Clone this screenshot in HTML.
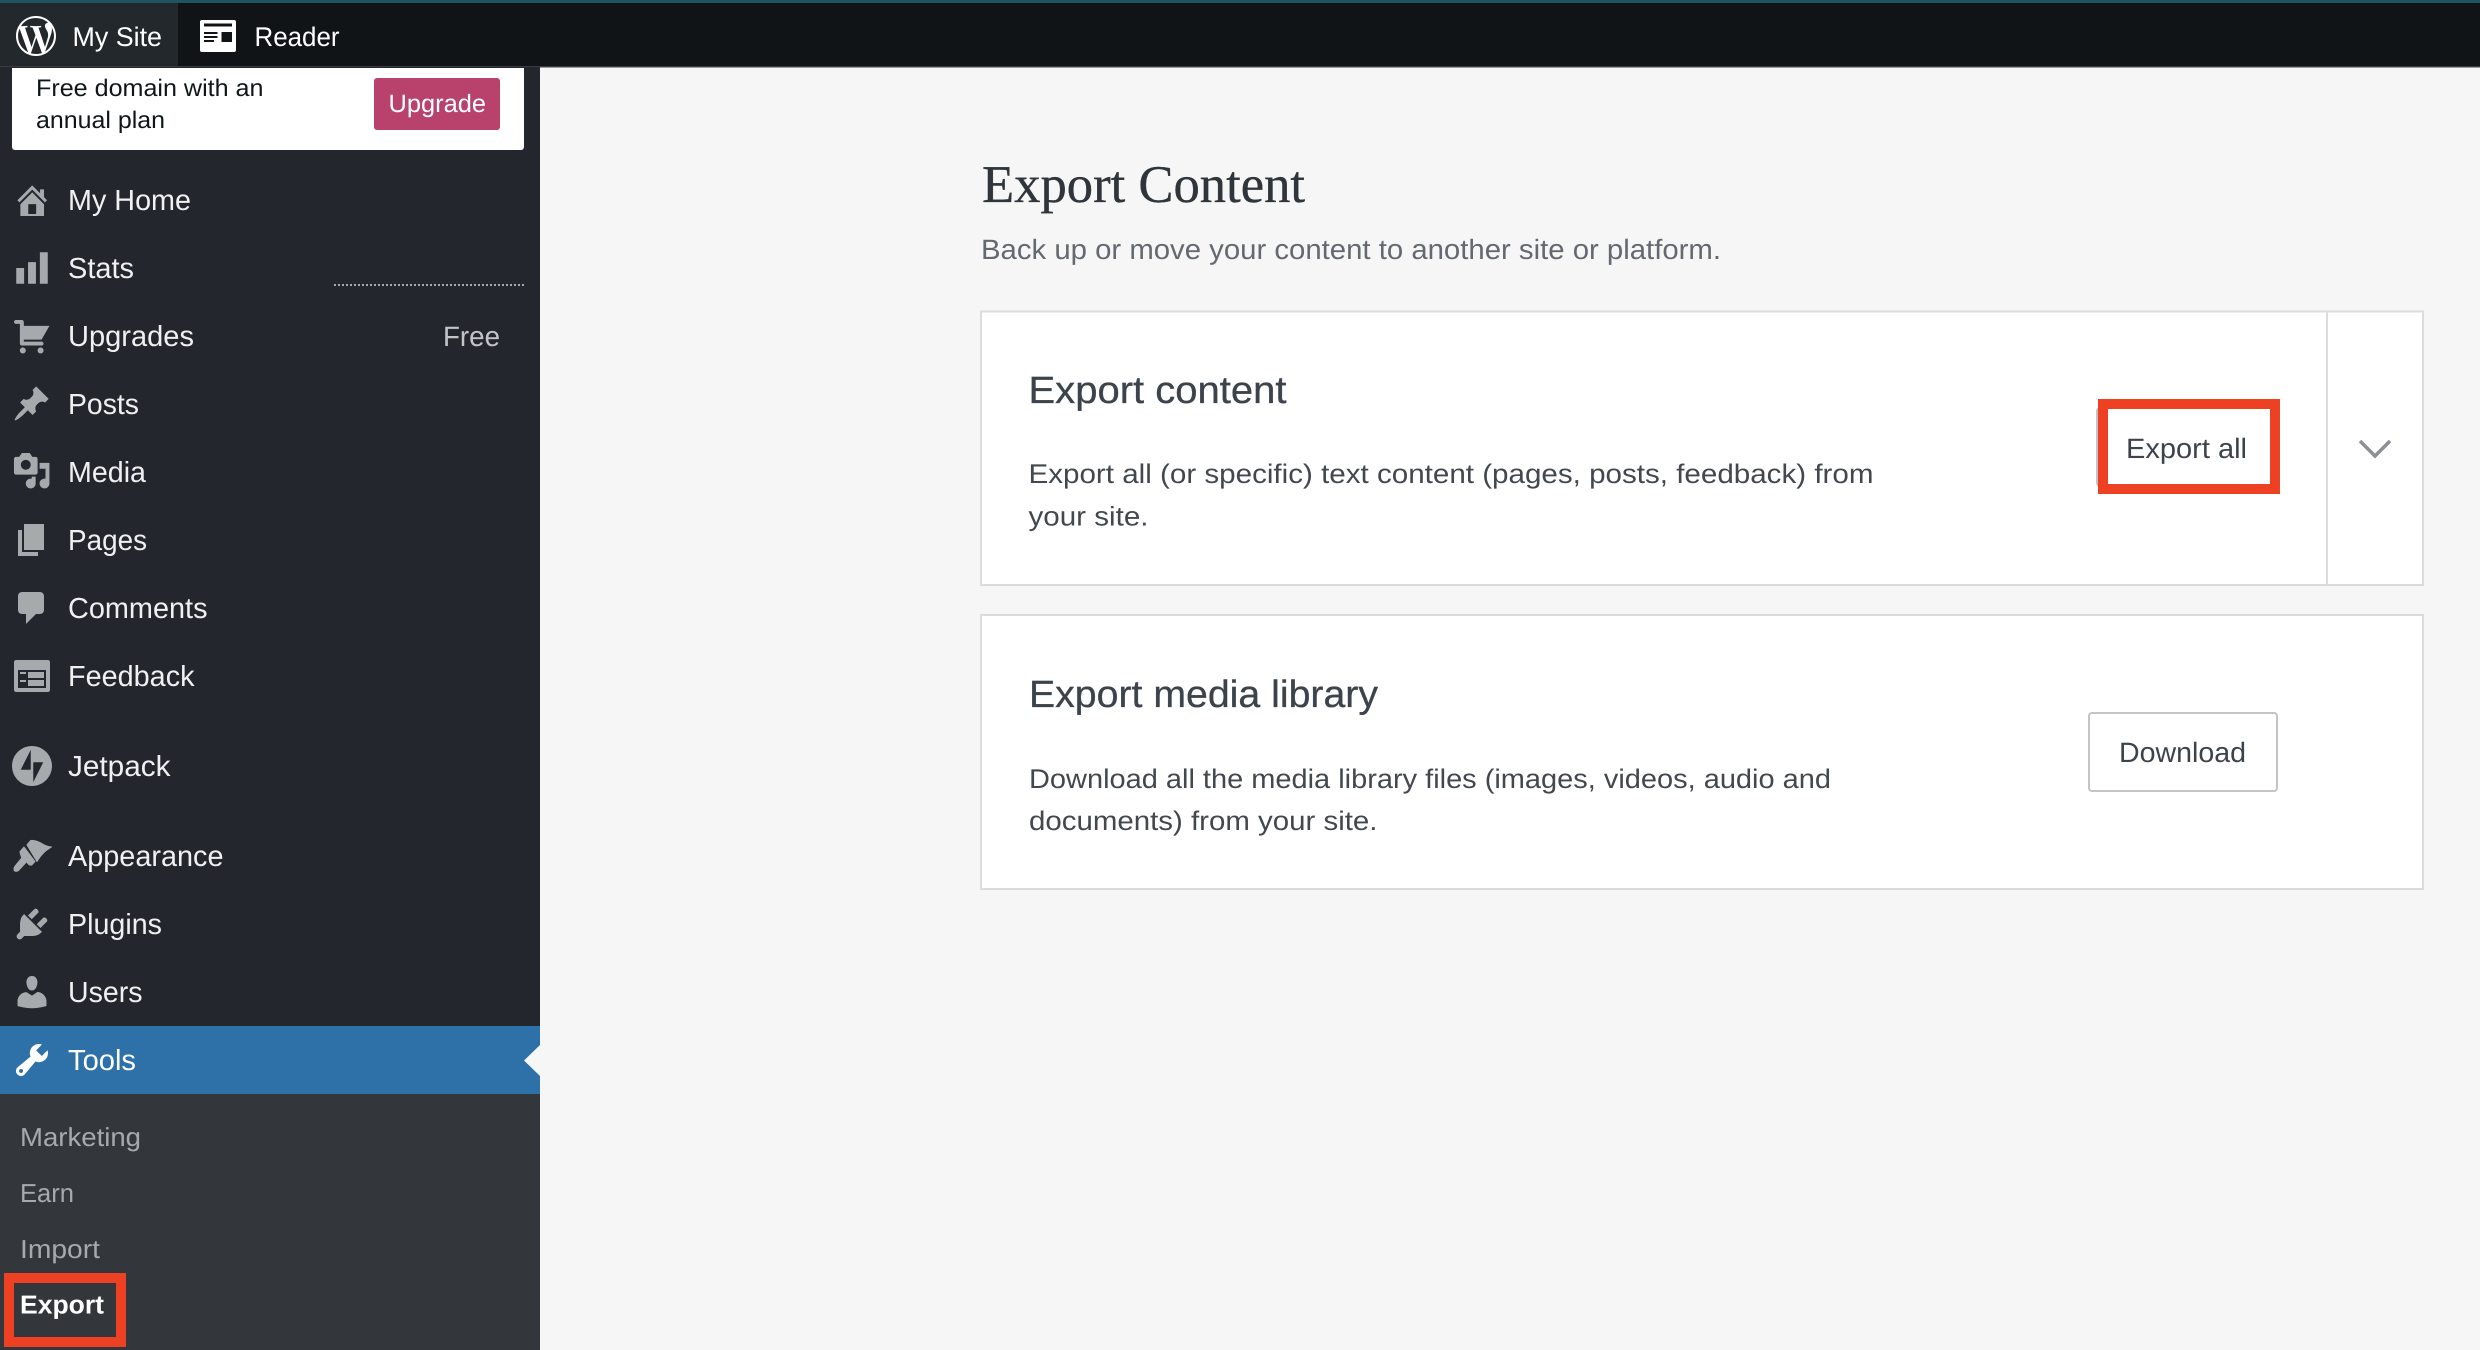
<!DOCTYPE html>
<html lang="en"><head><meta charset="utf-8"><title>Export Content</title>
<style>
html,body{margin:0;padding:0;width:2480px;height:1350px;overflow:hidden;background:#f6f6f7}
svg{display:block}
text{font-family:"Liberation Sans",sans-serif;text-rendering:geometricPrecision}
.m{font-size:29px;fill:#f0f0f1}
.s{font-size:26px;fill:#a7aaad}
.d{font-size:27px;fill:#43484e}
.h{font-size:38px;fill:#3c434a;stroke:#3c434a;stroke-width:.3px}
.i{fill:#a7aaad}
</style></head><body>
<svg width="2480" height="1350" viewBox="0 0 2480 1350" xmlns="http://www.w3.org/2000/svg">
<rect width="2480" height="1350" fill="#f6f6f7"/>

<!-- top bar -->
<rect width="2480" height="66" fill="#101417"/>
<rect width="2480" height="3" fill="#1f5560"/>
<rect y="66" width="2480" height="1.500" fill="#3a3d40"/>
<rect y="3" width="178" height="63" fill="#23282d"/>
<g transform="translate(12,12) scale(2)" fill="#fff"><path d="M12 2C6.486 2 2 6.486 2 12s4.486 10 10 10 10-4.486 10-10S17.514 2 12 2zM3.010 12c0-1.303.280-2.540.780-3.657l4.290 11.752C5.080 18.638 3.010 15.560 3.010 12zM12 20.990c-.882 0-1.734-.130-2.540-.366l2.698-7.840 2.763 7.570c.020.044.042.085.065.124-.934.330-1.938.512-2.985.512zm1.240-13.206c.540-.028 1.028-.085 1.028-.085.484-.058.427-.770-.057-.742 0 0-1.458.114-2.400.114-.885 0-2.370-.114-2.370-.114-.486-.028-.543.712-.058.740 0 0 .460.058.945.086l1.402 3.840-1.970 5.905-3.275-9.746c.542-.028 1.030-.085 1.030-.085.484-.058.426-.770-.058-.742 0 0-1.457.114-2.400.114-.170 0-.370-.004-.580-.010C6.080 4.395 8.850 3.010 12 3.010c2.340 0 4.474.895 6.073 2.360-.038-.002-.076-.008-.115-.008-.885 0-1.514.770-1.514 1.600 0 .740.430 1.368.885 2.108.343.600.742 1.370.742 2.482 0 .770-.296 1.664-.685 2.910l-.900 3.010-3.260-9.690zm3.293 12.033l2.746-7.940c.514-1.283.685-2.310.685-3.223 0-.330-.022-.638-.060-.925.703 1.283 1.103 2.755 1.103 4.270 0 3.212-1.740 6.016-4.474 7.818z"/></g>
<text x="72.500" y="46" font-size="27" fill="#fff" textLength="89.500" lengthAdjust="spacingAndGlyphs">My Site</text>
<rect x="200" y="20" width="36" height="32" rx="2" fill="#fff"/>
<rect x="204" y="23.500" width="28" height="3" fill="#101417"/>
<rect x="204" y="32" width="13.500" height="2" fill="#101417"/><rect x="204" y="36" width="13.500" height="2" fill="#101417"/><rect x="204" y="40" width="10" height="2" fill="#101417"/>
<rect x="221.500" y="32" width="10.500" height="10" fill="#101417"/>
<text x="254.500" y="46" font-size="27" fill="#fff" textLength="85" lengthAdjust="spacingAndGlyphs">Reader</text>

<!-- sidebar -->
<rect y="67" width="540" height="1283" fill="#23272d"/>
<path d="M12 68H524V147a3 3 0 0 1-3 3H15a3 3 0 0 1-3-3z" fill="#fff"/>
<text x="36" y="96" font-size="24" fill="#101517" textLength="227.500" lengthAdjust="spacingAndGlyphs">Free domain with an</text>
<text x="36" y="128" font-size="24" fill="#101517" textLength="129" lengthAdjust="spacingAndGlyphs">annual plan</text>
<rect x="374" y="78" width="126" height="52" rx="3" fill="#b9426c"/>
<text x="388.500" y="112" font-size="25" fill="#fff" textLength="97.500" lengthAdjust="spacingAndGlyphs">Upgrade</text>

<line x1="334" y1="285" x2="524" y2="285" stroke="#a7aaad" stroke-width="2" stroke-dasharray="2 2"/>

<g class="i">
<path transform="translate(12.500,180.500) scale(1.97)" d="M16 8.500l1.530 1.530-1.060 1.060L10 4.620l-6.470 6.470-1.060-1.060L10 2.500l4 4v-2h2v4zm-6-2.460l6 5.990V18H4v-5.970zM12 17v-5H8v5h4z"/>
<path transform="translate(12.300,248.300) scale(1.97)" d="M18 18V2h-4v16h4zm-6 0V7H8v11h4zm-6 0v-8H2v8h4z"/>
<path transform="translate(12,316) scale(1.97)" d="M6 13h9c.550 0 1 .450 1 1s-.450 1-1 1H5c-.550 0-1-.450-1-1V4H2c-.550 0-1-.450-1-1s.450-1 1-1h3c.550 0 1 .450 1 1v2h13l-4 7H6v1zm-.500 3c.830 0 1.500.670 1.500 1.500S6.330 19 5.500 19 4 18.330 4 17.500 4.670 16 5.500 16zm9 0c.830 0 1.500.670 1.500 1.500s-.670 1.500-1.500 1.500-1.500-.670-1.500-1.500.670-1.500 1.500-1.500z"/>
<path transform="translate(12,384) scale(1.97)" d="M10.440 3.020l1.820-1.820 6.360 6.350-1.830 1.820c-1.050-.680-2.480-.570-3.410.360l-.750.750c-.920.930-1.040 2.350-.350 3.410l-1.830 1.820-2.410-2.410-2.800 2.790c-.420.420-3.380 2.710-3.800 2.290s1.860-3.390 2.280-3.810l2.790-2.790L4.100 9.360l1.830-1.820c1.050.690 2.480.570 3.400-.360l.750-.750c.930-.920 1.050-2.350.360-3.410z"/>
<path transform="translate(12,451) scale(1.97)" d="M13 11V4c0-.550-.450-1-1-1h-1.670L9 1H5L3.670 3H2c-.550 0-1 .450-1 1v7c0 .550.450 1 1 1h10c.550 0 1-.450 1-1zM7 4.500c1.380 0 2.500 1.120 2.500 2.500S8.380 9.500 7 9.500 4.500 8.380 4.500 7 5.620 4.500 7 4.500zM14 6h5v10.500c0 1.380-1.120 2.500-2.500 2.500S14 17.880 14 16.500s1.120-2.500 2.500-2.500c.170 0 .340.020.500.050V9h-3V6zm-4 8.050V13h2v3.500c0 1.380-1.120 2.500-2.500 2.500S7 17.880 7 16.500 8.120 14 9.500 14c.170 0 .340.020.500.050z"/>
<path transform="translate(12,520) scale(2)" d="M6 15V2h10v13H6zm-1 1h8v2H3V5h2v11z"/>
<path transform="translate(12,588) scale(2)" d="M5 2h9c1.100 0 2 .900 2 2v7c0 1.100-.900 2-2 2h-2l-5 5v-5H5c-1.100 0-2-.900-2-2V4c0-1.100.900-2 2-2z"/>
<path transform="translate(12,656) scale(2)" d="M2 2h16c.550 0 1 .450 1 1v14c0 .550-.450 1-1 1H2c-.550 0-1-.450-1-1V3c0-.550.450-1 1-1zm15 14V7H3v9h14zM4 8v1h3V8H4zm4 0v3h8V8H8zm-4 4v1h3v-1H4zm4 0v3h8v-3H8z"/>
<path transform="translate(12,746) scale(1.25)" d="M16,0C7.200,0,0,7.200,0,16s7.200,16,16,16s16-7.200,16-16S24.800,0,16,0z M15,19H7l8-16V19z M17,29V13h8L17,29z"/>
<path stroke="#a7aaad" stroke-width="1" stroke-linejoin="round" d="M27 845 30.700 840.500C34 840 38 841.500 41.700 843.500 45 845.500 48 846.500 51.500 847 48.500 849 45.500 850.500 43 853.500 40.500 856 38.500 859 37 861.500z"/>
<path stroke="#a7aaad" stroke-width="1" stroke-linejoin="round" d="M24 847 35 861.500 31.700 865C30 865.500 28 864 26.700 861.700L18.500 870.500C16.500 872 14 871.500 14 869.500 14 867.500 15 866 16 865L21.700 858C21.500 856 20 854 20 851.700z"/>
<path transform="translate(12,904) scale(2)" d="M13.110 4.360L9.870 7.600 8 5.730l3.240-3.240c.350-.340 1.050-.200 1.560.320.520.510.660 1.210.310 1.550zm-8 1.770l.910-1.120 9.010 9.010-1.190.840c-.710.710-2.630 1.160-3.820 1.160H6.140L4.900 17.260c-.590.590-1.540.590-2.120 0-.590-.580-.590-1.530 0-2.120l1.240-1.240v-3.880c0-1.130.400-3.190 1.090-3.890zm7.260 3.970l3.240-3.240c.340-.350 1.040-.210 1.550.310.520.510.660 1.210.310 1.550l-3.240 3.250z"/>
<path transform="translate(12,972) scale(2)" d="M10 9.250c-2.270 0-2.730-3.440-2.730-3.440C7 4.020 7.820 2 9.970 2c2.160 0 2.980 2.020 2.710 3.810 0 0-.410 3.440-2.680 3.440zm0 2.570L12.720 10c2.390 0 4.520 2.330 4.520 4.530v2.490s-3.650 1.130-7.240 1.130c-3.650 0-7.240-1.130-7.240-1.130v-2.490c0-2.250 1.940-4.480 4.470-4.480z"/>
</g>

<text class="m" x="68" y="210" textLength="123" lengthAdjust="spacingAndGlyphs">My Home</text>
<text class="m" x="68" y="278" textLength="66" lengthAdjust="spacingAndGlyphs">Stats</text>
<text class="m" x="68" y="346" textLength="126" lengthAdjust="spacingAndGlyphs">Upgrades</text>
<text x="443" y="346" font-size="28" fill="#c3c4c7" textLength="57" lengthAdjust="spacingAndGlyphs">Free</text>
<text class="m" x="68" y="414" textLength="71" lengthAdjust="spacingAndGlyphs">Posts</text>
<text class="m" x="68" y="482" textLength="78" lengthAdjust="spacingAndGlyphs">Media</text>
<text class="m" x="68" y="550" textLength="79" lengthAdjust="spacingAndGlyphs">Pages</text>
<text class="m" x="68" y="618" textLength="139.500" lengthAdjust="spacingAndGlyphs">Comments</text>
<text class="m" x="68" y="686" textLength="126.500" lengthAdjust="spacingAndGlyphs">Feedback</text>
<text class="m" x="68" y="776" textLength="102.500" lengthAdjust="spacingAndGlyphs">Jetpack</text>
<text class="m" x="68" y="866" textLength="155.500" lengthAdjust="spacingAndGlyphs">Appearance</text>
<text class="m" x="68" y="934" textLength="94" lengthAdjust="spacingAndGlyphs">Plugins</text>
<text class="m" x="68" y="1002" textLength="74.500" lengthAdjust="spacingAndGlyphs">Users</text>

<rect y="1026" width="540" height="68" fill="#2d71a8"/>
<path d="M540 1045V1076L524 1060.500z" fill="#f6f7f7"/>
<path transform="translate(12,1040) scale(2)" fill="#fff" d="M16.680 9.770c-1.340 1.340-3.300 1.670-4.950.990l-5.410 6.520c-.990.990-2.590.990-3.580 0s-.990-2.590 0-3.570l6.520-5.420c-.680-1.650-.350-3.610.990-4.950 1.280-1.280 3.120-1.620 4.720-1.060l-2.890 2.890 2.820 2.820 2.860-2.870c.530 1.580.180 3.390-1.080 4.670zM3.810 16.210c.400.390 1.040.390 1.430 0 .400-.400.400-1.040 0-1.430-.390-.400-1.030-.400-1.430 0-.390.390-.390 1.030 0 1.430z"/>
<text x="68" y="1070" font-size="29" fill="#fff" textLength="68" lengthAdjust="spacingAndGlyphs">Tools</text>

<rect y="1094" width="540" height="256" fill="#33373c"/>
<text class="s" x="20" y="1146" textLength="121" lengthAdjust="spacingAndGlyphs">Marketing</text>
<text class="s" x="20" y="1202" textLength="54" lengthAdjust="spacingAndGlyphs">Earn</text>
<text class="s" x="20" y="1258" textLength="80" lengthAdjust="spacingAndGlyphs">Import</text>
<text x="20" y="1313.500" font-size="26" font-weight="700" fill="#fff" textLength="84" lengthAdjust="spacingAndGlyphs">Export</text>
<rect x="9" y="1278" width="112" height="64" fill="none" stroke="#ee4123" stroke-width="10"/>

<!-- content -->
<text x="982" y="202" font-size="53" fill="#2f353a" stroke="#2f353a" stroke-width=".35" style="font-family:'Liberation Serif',serif" textLength="323" lengthAdjust="spacingAndGlyphs">Export Content</text>
<text x="981" y="259" font-size="28" fill="#646970" textLength="740" lengthAdjust="spacingAndGlyphs">Back up or move your content to another site or platform.</text>

<rect x="981" y="311.500" width="1442" height="273.500" fill="#fff" stroke="#dcdcde" stroke-width="2"/>
<line x1="2327" y1="311" x2="2327" y2="585" stroke="#dcdcde" stroke-width="2"/>
<text class="h" x="1028.500" y="403" textLength="258" lengthAdjust="spacingAndGlyphs">Export content</text>
<text class="d" x="1028.500" y="483" textLength="845" lengthAdjust="spacingAndGlyphs">Export all (or specific) text content (pages, posts, feedback) from</text>
<text class="d" x="1028.500" y="525.500" textLength="120" lengthAdjust="spacingAndGlyphs">your site.</text>
<rect x="2097" y="408" width="180" height="78" rx="3" fill="#fff" stroke="#c3c4c7" stroke-width="2"/>
<rect x="2103" y="404" width="172" height="85" fill="none" stroke="#ee4123" stroke-width="10"/>
<text x="2126" y="458" font-size="28" fill="#3c434a" textLength="121" lengthAdjust="spacingAndGlyphs">Export all</text>
<path d="M2360 441L2375 456L2390 441" fill="none" stroke="#8c8f94" stroke-width="3.500"/>

<rect x="981" y="615" width="1442" height="274" fill="#fff" stroke="#dcdcde" stroke-width="2"/>
<text class="h" x="1029" y="707" textLength="349" lengthAdjust="spacingAndGlyphs">Export media library</text>
<text class="d" x="1029" y="788" textLength="802" lengthAdjust="spacingAndGlyphs">Download all the media library files (images, videos, audio and</text>
<text class="d" x="1029" y="830" textLength="348.500" lengthAdjust="spacingAndGlyphs">documents) from your site.</text>
<rect x="2089" y="713" width="188" height="78" rx="3" fill="#fff" stroke="#c3c4c7" stroke-width="2"/>
<text x="2119" y="762" font-size="28" fill="#3c434a" textLength="127" lengthAdjust="spacingAndGlyphs">Download</text>
</svg>
</body></html>
